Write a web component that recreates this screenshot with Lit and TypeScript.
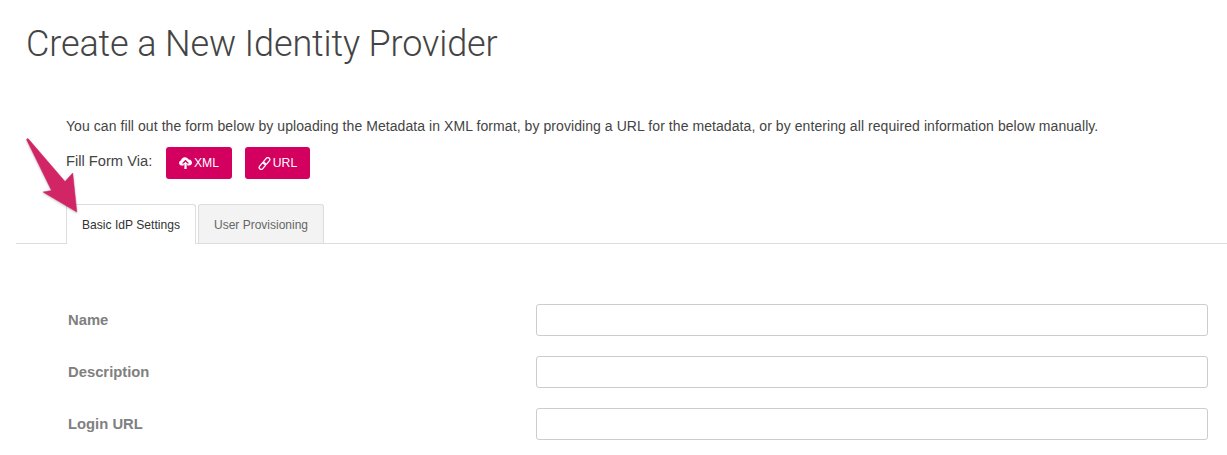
import { LitElement, html, css } from "lit";
import { customElement } from "lit/decorators.js";

@customElement("app-root")
export class AppRoot extends LitElement {
  static styles = css`
    :host {
      display: block;
      position: relative;
      width: 1227px;
      height: 455px;
      overflow: hidden;
      background: #fff;
      font-family: "Liberation Sans", Arial, sans-serif;
      color: #444;
    }
    .page { padding: 0 0 0 16px; }
    h1 {
      margin: 0;
      padding: 23px 0 0 10px;
      height: 44px;
      font: 300 36px/42px Roboto, "Liberation Sans", sans-serif;
      letter-spacing: -0.13px;
      color: #444;
      box-sizing: content-box;
    }
    .intro {
      margin: 0;
      padding: 51px 0 0 50px;
      font-size: 14px;
      letter-spacing: 0.07px;
      line-height: 16px;
      color: #444;
    }
    .via {
      display: flex;
      align-items: flex-start;
      padding: 13px 0 0 50px;
      height: 57px;
      box-sizing: content-box;
    }
    .via-label { font-size: 14.7px; line-height: 28px; color: #444; width: 100px; }
    .btn {
      display: flex;
      align-items: center;
      justify-content: center;
      gap: 2px;
      height: 32px;
      border-radius: 3px;
      background: #d40060;
      color: #fff;
      font-size: 12.2px;
      box-sizing: border-box;
    }
    .btn.xml { width: 66px; margin-right: 13px; }
    .btn.url { width: 65px; }
    .btn svg { display: block; }
    .tabs {
      display: flex;
      align-items: flex-start;
      gap: 2px;
      height: 40px;
      box-sizing: border-box;
      padding-left: 50px;
      border-bottom: 1px solid #ddd;
    }
    .tab {
      display: flex;
      align-items: center;
      justify-content: center;
      height: 39px;
      box-sizing: border-box;
      border: 1px solid #ddd;
      border-bottom: 0;
      border-radius: 3px 3px 0 0;
      font-size: 12px;
      padding-top: 2px;
    }
    .tab.on { width: 130px; height: 40px; background: #fff; color: #333; position: relative; font-size: 12.1px; padding-top: 1px; }
    .tab.off { width: 126px; background: #f3f3f3; color: #666; }
    .form {
      display: flex;
      flex-direction: column;
      gap: 20px;
      padding: 60px 19px 0 52px;
    }
    .row { display: flex; align-items: center; height: 32px; }
    label { width: 468px; font-size: 14.8px; font-weight: 700; color: #808080; }
    input {
      flex: 1;
      height: 32px;
      box-sizing: border-box;
      border: 1px solid #ccc;
      border-radius: 3px;
      background: #fff;
      padding: 0 8px;
      margin: 0;
      outline: none;
    }
    .arrow { position: absolute; left: 0; top: 0; pointer-events: none; filter: drop-shadow(0 1px 1px rgba(0,0,0,.25)); }
  `;

  render() {
    return html`
      <div class="page">
        <h1>Create a New Identity Provider</h1>
        <p class="intro">You can fill out the form below by uploading the Metadata in XML format, by providing a URL for the metadata, or by entering all required information below manually.</p>
        <div class="via">
          <span class="via-label">Fill Form Via:</span>
          <div class="btn xml">
            <svg width="13" height="12" viewBox="0 0 13 12" fill="#fff">
              <path d="M3 8.5C1.3 8.5 0 7.4 0 5.9 0 4.7.8 3.700 2 3.400 2.300 1.500 3.900.2 5.900.2c1.700 0 3.100 1 3.700 2.400C11.500 2.500 13 3.900 13 5.700c0 1.600-1.300 2.800-3 2.800H8.300V6.600h1.900L6.500 2.800 2.800 6.600h1.900v1.900z"/>
              <path d="M6.500 4.700 9 7.300H7.600V12H5.400V7.300H4z"/>
            </svg>
            <span>XML</span>
          </div>
          <div class="btn url">
            <svg width="13" height="13" viewBox="0 0 13 13" fill="none" stroke="#fff" stroke-width="1.3">
              <g transform="rotate(40 6.500 6.500)">
                <rect x="4.500" y="-.6" width="4" height="7.600" rx="2"/>
                <rect x="4.500" y="6" width="4" height="7.600" rx="2"/>
              </g>
            </svg>
            <span>URL</span>
          </div>
        </div>
        <div class="tabs">
          <div class="tab on">Basic IdP Settings</div>
          <div class="tab off">User Provisioning</div>
        </div>
        <div class="form">
          <div class="row"><label>Name</label><input type="text" /></div>
          <div class="row"><label>Description</label><input type="text" /></div>
          <div class="row"><label>Login URL</label><input type="text" /></div>
        </div>
      </div>
      <svg class="arrow" width="120" height="230" viewBox="0 0 120 230">
        <path d="M26.500 139.500 28 138.500 65 181.500 72.700 173 76.800 212 43 192 51.500 190.500z" fill="#d12566" stroke="#d12566" stroke-width=".5" stroke-linejoin="round"/>
      </svg>
    `;
  }
}
